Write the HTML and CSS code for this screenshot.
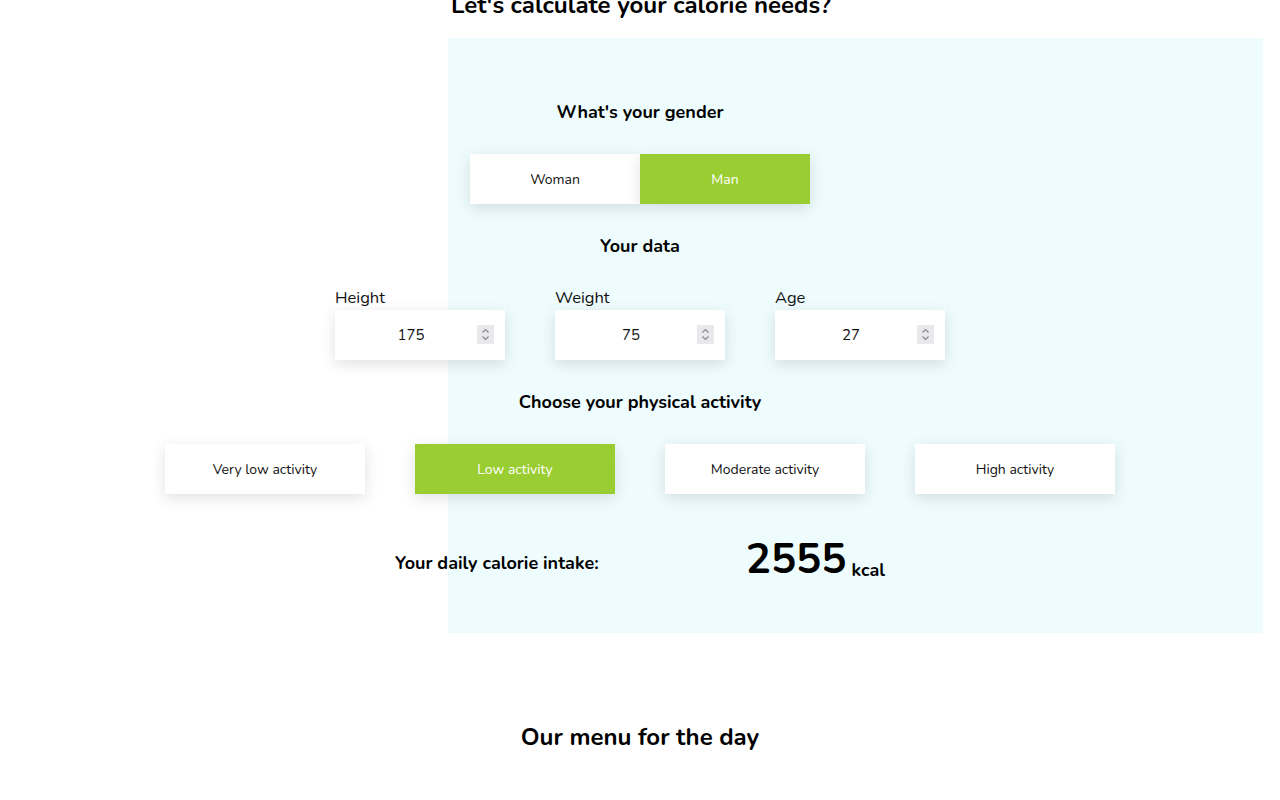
FILE: index.html
```html
<!DOCTYPE html>
<html lang="en">
<head>
<meta charset="utf-8">
<title>Calorie calculator</title>
<link rel="stylesheet" href="styles.css">
</head>
<body>
<main class="page">
  <section class="calc">
    <h2 class="calc-title">Let's calculate your calorie needs?</h2>
    <div class="calc-body">
      <h3 class="calc-subtitle">What's your gender</h3>
      <div class="gender">
        <button class="choice">Woman</button>
        <button class="choice choice--active">Man</button>
      </div>

      <h3 class="calc-subtitle">Your data</h3>
      <div class="fields">
        <label class="field">
          <span class="field-label">Height</span>
          <span class="field-box">
            <input class="field-input" type="number" value="175">
            <svg class="spinner" viewBox="0 0 17 19" aria-hidden="true"><path d="M5.5 7.5 8.5 4.5 11.5 7.5M5.5 11.5 8.5 14.5 11.5 11.5"/></svg>
          </span>
        </label>
        <label class="field">
          <span class="field-label">Weight</span>
          <span class="field-box">
            <input class="field-input" type="number" value="75">
            <svg class="spinner" viewBox="0 0 17 19" aria-hidden="true"><path d="M5.5 7.5 8.5 4.5 11.5 7.5M5.5 11.5 8.5 14.5 11.5 11.5"/></svg>
          </span>
        </label>
        <label class="field">
          <span class="field-label">Age</span>
          <span class="field-box">
            <input class="field-input" type="number" value="27">
            <svg class="spinner" viewBox="0 0 17 19" aria-hidden="true"><path d="M5.5 7.5 8.5 4.5 11.5 7.5M5.5 11.5 8.5 14.5 11.5 11.5"/></svg>
          </span>
        </label>
      </div>

      <h3 class="calc-subtitle">Choose your physical activity</h3>
      <div class="activity">
        <button class="choice choice--wide">Very low activity</button>
        <button class="choice choice--wide choice--active">Low activity</button>
        <button class="choice choice--wide">Moderate activity</button>
        <button class="choice choice--wide">High activity</button>
      </div>

      <div class="result">
        <span class="result-label">Your daily calorie intake:</span>
        <span class="result-value"><span class="result-number">2555</span><span class="result-unit">kcal</span></span>
      </div>
    </div>
  </section>

  <section class="menu">
    <h2 class="menu-title">Our menu for the day</h2>
  </section>
</main>
</body>
</html>
```

FILE: styles.css
```css
html {
  overflow-y: scroll;
}

body {
  margin: 0;
  font-family: "Nunito", Lato, "Noto Sans", sans-serif;
  color: #000;
  background: #fff;
}

.page {
  width: 1280px;
  margin-top: -11px;
}

.calc-title {
  margin: 0 0 0 451px;
  font-size: 24px;
  line-height: 32px;
  font-weight: 700;
  height: 49px;
}

.calc-body {
  position: relative;
  display: flex;
  flex-direction: column;
  align-items: center;
  padding: 62px 0 45px;
}

.calc-body::before {
  content: "";
  position: absolute;
  left: 448px;
  top: 0;
  width: 815px;
  height: 100%;
  background: #eefcfd;
  z-index: -1;
}

.calc-subtitle {
  margin: 0;
  font-size: 18px;
  line-height: 24px;
  font-weight: 700;
}

.gender {
  display: flex;
  margin: 30px 0 30px;
}

.choice {
  width: 170px;
  height: 50px;
  border: 0;
  background: #fff;
  font-family: inherit;
  font-size: 14px;
  color: #111;
  box-shadow: 0 4px 14px rgba(0, 0, 0, 0.12);
  cursor: pointer;
}

.choice--active {
  background: #9acd32;
  color: #fff;
}

.choice--wide {
  width: 200px;
}

.fields {
  display: flex;
  gap: 50px;
  margin: 30px 0 30px;
}

.field {
  display: flex;
  flex-direction: column;
}

.field-label {
  margin-bottom: 2px;
  font-size: 16.5px;
  line-height: 20px;
  color: #111;
}

.field-box {
  position: relative;
  display: block;
}

.field-input {
  display: block;
  width: 170px;
  height: 50px;
  box-sizing: border-box;
  border: 0;
  padding: 0 18px 0 0;
  background: #fff;
  font-family: inherit;
  font-size: 15px;
  color: #111;
  text-align: center;
  box-shadow: 0 4px 14px rgba(0, 0, 0, 0.12);
  -moz-appearance: textfield;
}

.field-input::-webkit-inner-spin-button,
.field-input::-webkit-outer-spin-button {
  -webkit-appearance: none;
  margin: 0;
}

.spinner {
  position: absolute;
  right: 11px;
  top: 15px;
  width: 17px;
  height: 19px;
  background: #e9e9ed;
  fill: none;
  stroke: #8a8a8a;
  stroke-width: 1.2;
  pointer-events: none;
}

.activity {
  display: flex;
  gap: 50px;
  margin: 30px 0 37px;
}

.result {
  width: 490px;
  display: flex;
  justify-content: space-between;
  align-items: center;
}

.result-label {
  margin-top: 7px;
  font-size: 18px;
  font-weight: 700;
}

.result-number {
  font-size: 42px;
  font-weight: 700;
}

.result-unit {
  margin-left: 5px;
  font-size: 18px;
  font-weight: 700;
  vertical-align: -3px;
}

.menu {
  padding-top: 88px;
  text-align: center;
}

.menu-title {
  margin: 0;
  font-size: 24px;
  line-height: 32px;
  font-weight: 700;
}
```
